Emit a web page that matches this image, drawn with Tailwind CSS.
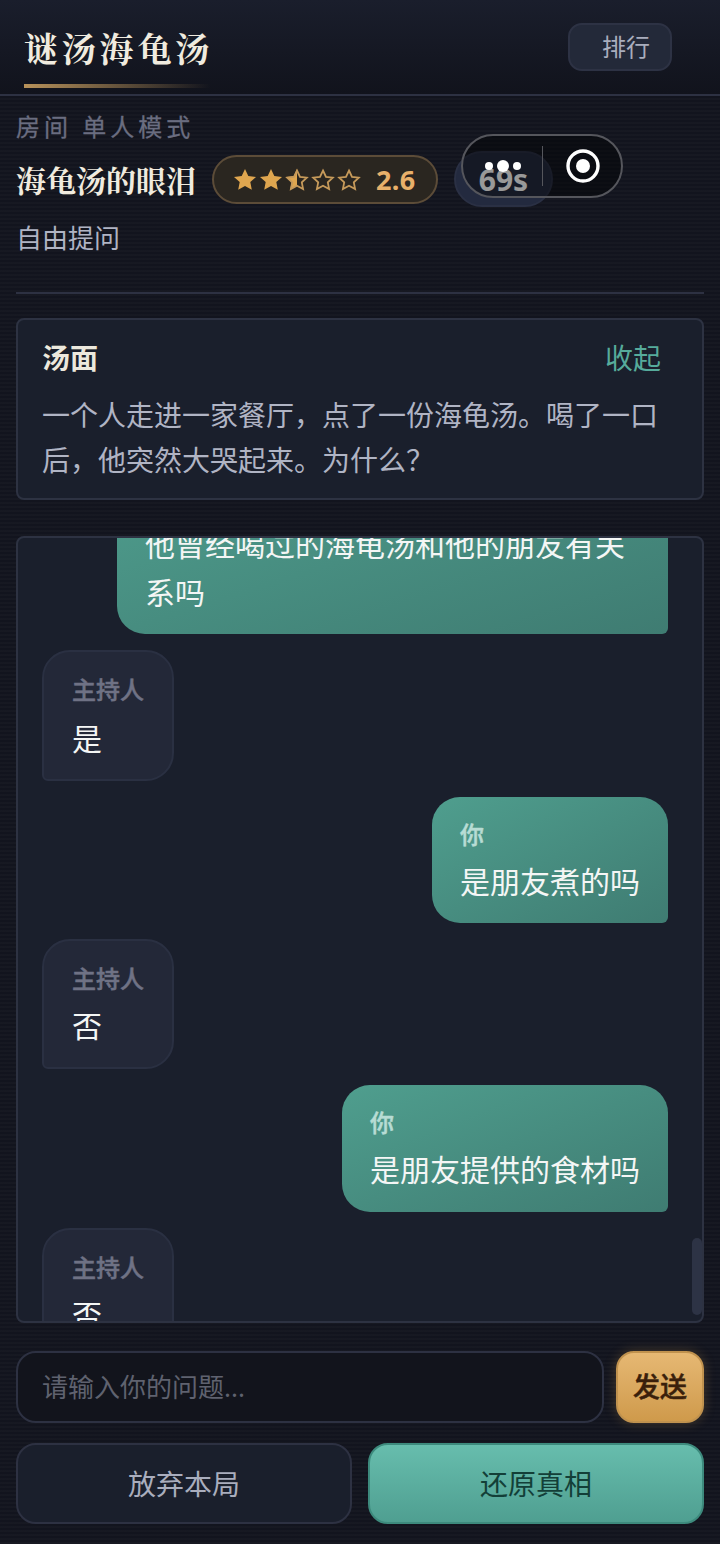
<!DOCTYPE html>
<html lang="zh-CN">
<head>
  <meta charset="UTF-8" />
  <meta name="viewport" content="width=device-width, initial-scale=1.0" />
  <title>谜汤海龟汤</title>
  <script src="https://cdn.jsdelivr.net/npm/@tailwindcss/browser@4"></script>
</head>
<body class="relative w-[720px] h-[1544px] overflow-hidden bg-[#12141e] bg-[repeating-linear-gradient(0deg,#ffffff05_0px,#ffffff05_2px,transparent_2px,transparent_4px)] font-['Noto_Sans','Noto_Sans_CJK_SC',sans-serif]">
  <!-- Header -->
  <header class="flex justify-between items-start h-[96px] px-6 border-b-2 border-[#2d3142] bg-gradient-to-b from-[#1a1e2c] to-[#11131c]">
    <div class="w-[186px] h-[88px] pt-[23px] relative">
      <h1 class="text-[34px] leading-[50px] font-bold tracking-[3.8px] whitespace-nowrap text-[#f0ebdf] font-['Noto_Serif_CJK_SC','Noto_Sans_CJK_SC',serif]">谜汤海龟汤</h1>
      <div class="absolute left-0 bottom-0 w-full h-[4px] bg-gradient-to-r from-[#b8925a] to-transparent"></div>
    </div>
    <button class="mt-[23px] mr-[24px] w-[104px] h-[48px] pl-[32px] text-left text-[24px] leading-[44px] text-[#a9adbd] bg-[#232939] border-2 border-[#2d3244] rounded-[14px]">排行</button>
  </header>

  <!-- Room info -->
  <section class="relative mx-4 h-[198px] border-b-2 border-[#2d3142]">
    <div class="pt-[13px] text-[24px] leading-[36px] tracking-[4px] text-[#6a6d80] [-webkit-text-stroke:0.3px_currentColor]">房间 单人模式</div>
    <div class="flex items-center mt-[6px]">
      <h2 class="text-[30px] leading-[56px] font-bold whitespace-nowrap text-[#f0ebdf] font-['Noto_Serif_CJK_SC','Noto_Sans_CJK_SC',serif]">海龟汤的眼泪</h2>
      <div class="flex items-center ml-[16px] w-[226px] h-[49px] mt-[1px] pl-[18px] rounded-full border-2 border-[#5c4c38] bg-[#2a2620]">
        <svg class="w-[130px] h-[26px]" viewBox="0 0 130 26">
          <path fill="#dfa64f" d="M13 2l3.3 7 7.7.9-5.7 5.2 1.5 7.6L13 19l-6.8 3.7 1.5-7.6L2 9.9 9.7 9z"/>
          <path fill="#dfa64f" transform="translate(26 0)" d="M13 2l3.3 7 7.7.9-5.7 5.2 1.5 7.6L13 19l-6.8 3.7 1.5-7.6L2 9.9 9.7 9z"/>
          <path fill="#dfa64f" transform="translate(52 0)" d="M13 2v17l-6.8 3.7 1.5-7.6L2 9.9 9.7 9z"/>
          <path fill="none" stroke="#c69a5a" stroke-width="1.8" transform="translate(52 0)" d="M13 3.5l3 6.3 6.8.8-5 4.7 1.3 6.7L13 18.8l-6.1 3.2 1.3-6.7-5-4.7 6.8-.8z"/>
          <path fill="none" stroke="#c69a5a" stroke-width="1.8" transform="translate(78 0)" d="M13 3.5l3 6.3 6.8.8-5 4.7 1.3 6.7L13 18.8l-6.1 3.2 1.3-6.7-5-4.7 6.8-.8z"/>
          <path fill="none" stroke="#c69a5a" stroke-width="1.8" transform="translate(104 0)" d="M13 3.5l3 6.3 6.8.8-5 4.7 1.3 6.7L13 18.8l-6.1 3.2 1.3-6.7-5-4.7 6.8-.8z"/>
        </svg>
        <span class="ml-[14px] text-[27px] leading-none font-bold tracking-[0.3px] text-[#e8b06a]">2.6</span>
      </div>
      <div class="flex items-center justify-center ml-[16px] w-[99px] h-[56px] rounded-full bg-[#232a3f] border-2 border-[#2a3044] text-[30px] font-bold text-white">69s</div>
    </div>
    <div class="mt-[11px] text-[26px] leading-[40px] text-[#b0b4c4]">自由提问</div>
    <!-- mini program capsule -->
    <div class="absolute left-[445px] top-[38px] flex items-center w-[162px] h-[64px] rounded-full border-2 border-[#55565c] bg-black/40">
      <div class="flex items-center justify-center gap-[4px] w-[79px]">
        <span class="w-[8px] h-[8px] rounded-full bg-white"></span>
        <span class="w-[12px] h-[12px] rounded-full bg-white"></span>
        <span class="w-[8px] h-[8px] rounded-full bg-white"></span>
      </div>
      <div class="w-[1px] h-[40px] bg-[#55565c]"></div>
      <div class="flex justify-center flex-1 pl-[2px]">
        <svg class="w-[34px] h-[34px]" viewBox="0 0 34 34"><circle cx="17" cy="17" r="15" fill="none" stroke="#fff" stroke-width="3.4"/><circle cx="17" cy="17" r="7" fill="#fff"/></svg>
      </div>
    </div>
  </section>

  <main class="px-4 pt-[24px]">
    <!-- Soup panel -->
    <section class="h-[182px] px-[24px] pt-[18px] rounded-[8px] border-2 border-[#2d3242] bg-[#1a1f2c]">
      <div class="flex justify-between items-center pr-[17px]">
        <h3 class="text-[28px] leading-[40px] font-bold text-[#ece8dd]">汤面</h3>
        <span class="text-[28px] leading-[40px] text-[#56ab9b]">收起</span>
      </div>
      <p class="mt-[15px] text-[28px] leading-[45px] text-[#b0b4c4]">一个人走进一家餐厅，点了一份海龟汤。喝了一口后，他突然大哭起来。为什么？</p>
    </section>

    <!-- Chat -->
    <section class="relative mt-[36px] h-[787px] overflow-hidden rounded-[8px] border-2 border-[#2d3242] bg-[#1a1f2c]">
      <div class="flex flex-col gap-[16px] -mt-[78px] pl-[24px] pr-[34px]">
        <div class="self-end w-[551px] pt-[20px] px-[28px] pb-[17px] rounded-[28px] rounded-br-[6px] bg-gradient-to-br from-[#4f9e8e] to-[#3f7c72]">
          <div class="text-[24px] leading-[36px] font-medium text-[#b7dcd4] [-webkit-text-stroke:0.5px_currentColor]">你</div>
          <div class="mt-[5px] text-[30px] leading-[48px] text-[#f4f6f5]">他曾经喝过的海龟汤和他的朋友有关系吗</div>
        </div>
        <div class="self-start w-[132px] h-[131px] pt-[20px] px-[28px] rounded-[28px] rounded-bl-[6px] border-2 border-[#2a3042] bg-[#232838]">
          <div class="text-[24px] leading-[36px] font-medium whitespace-nowrap text-[#6f7285] [-webkit-text-stroke:0.5px_currentColor]">主持人</div>
          <div class="mt-[7px] text-[30px] leading-[48px] text-[#f4f6f5]">是</div>
        </div>
        <div class="self-end w-[236px] h-[126px] pt-[20px] px-[28px] rounded-[28px] rounded-br-[6px] bg-gradient-to-br from-[#4f9e8e] to-[#3f7c72]">
          <div class="text-[24px] leading-[36px] font-medium text-[#b7dcd4] [-webkit-text-stroke:0.5px_currentColor]">你</div>
          <div class="mt-[5px] text-[30px] leading-[48px] whitespace-nowrap text-[#f4f6f5]">是朋友煮的吗</div>
        </div>
        <div class="self-start w-[132px] h-[130px] pt-[20px] px-[28px] rounded-[28px] rounded-bl-[6px] border-2 border-[#2a3042] bg-[#232838]">
          <div class="text-[24px] leading-[36px] font-medium whitespace-nowrap text-[#6f7285] [-webkit-text-stroke:0.5px_currentColor]">主持人</div>
          <div class="mt-[5px] text-[30px] leading-[48px] text-[#f4f6f5]">否</div>
        </div>
        <div class="self-end w-[326px] h-[127px] pt-[20px] px-[28px] rounded-[28px] rounded-br-[6px] bg-gradient-to-br from-[#4f9e8e] to-[#3f7c72]">
          <div class="text-[24px] leading-[36px] font-medium text-[#b7dcd4] [-webkit-text-stroke:0.5px_currentColor]">你</div>
          <div class="mt-[5px] text-[30px] leading-[48px] whitespace-nowrap text-[#f4f6f5]">是朋友提供的食材吗</div>
        </div>
        <div class="self-start w-[132px] h-[131px] pt-[20px] px-[28px] rounded-[28px] rounded-bl-[6px] border-2 border-[#2a3042] bg-[#232838]">
          <div class="text-[24px] leading-[36px] font-medium whitespace-nowrap text-[#6f7285] [-webkit-text-stroke:0.5px_currentColor]">主持人</div>
          <div class="mt-[5px] text-[30px] leading-[48px] text-[#f4f6f5]">否</div>
        </div>
      </div>
      <div class="absolute right-0 top-[700px] w-[10px] h-[77px] rounded-[5px] bg-[#2d3345]"></div>
    </section>

    <!-- Input row -->
    <div class="flex gap-[12px] mt-[28px]">
      <div class="flex items-center flex-1 h-[72px] px-[24px] rounded-[20px] border-2 border-[#2d3142] bg-[#12141c] text-[26px] text-[#5f626f]">请输入你的问题...</div>
      <button class="w-[88px] h-[72px] rounded-[18px] border-2 border-[#c0924e] bg-gradient-to-b from-[#e6b873] to-[#cf9a4b] shadow-[0_0_12px_#dfa64f40] text-[27px] font-medium text-[#3a1f0b] [-webkit-text-stroke:0.5px_currentColor]">发送</button>
    </div>

    <!-- Actions -->
    <div class="flex gap-[16px] mt-[20px]">
      <button class="flex-1 h-[81px] rounded-[20px] border-2 border-[#2d3142] bg-[#1a1f2c] text-[28px] text-[#a9adbd]">放弃本局</button>
      <button class="flex-1 h-[81px] rounded-[20px] border-2 border-[#3d8a7d] bg-gradient-to-b from-[#67bdad] to-[#4f9f91] text-[28px] text-[#133f38]">还原真相</button>
    </div>
  </main>
</body>
</html>
